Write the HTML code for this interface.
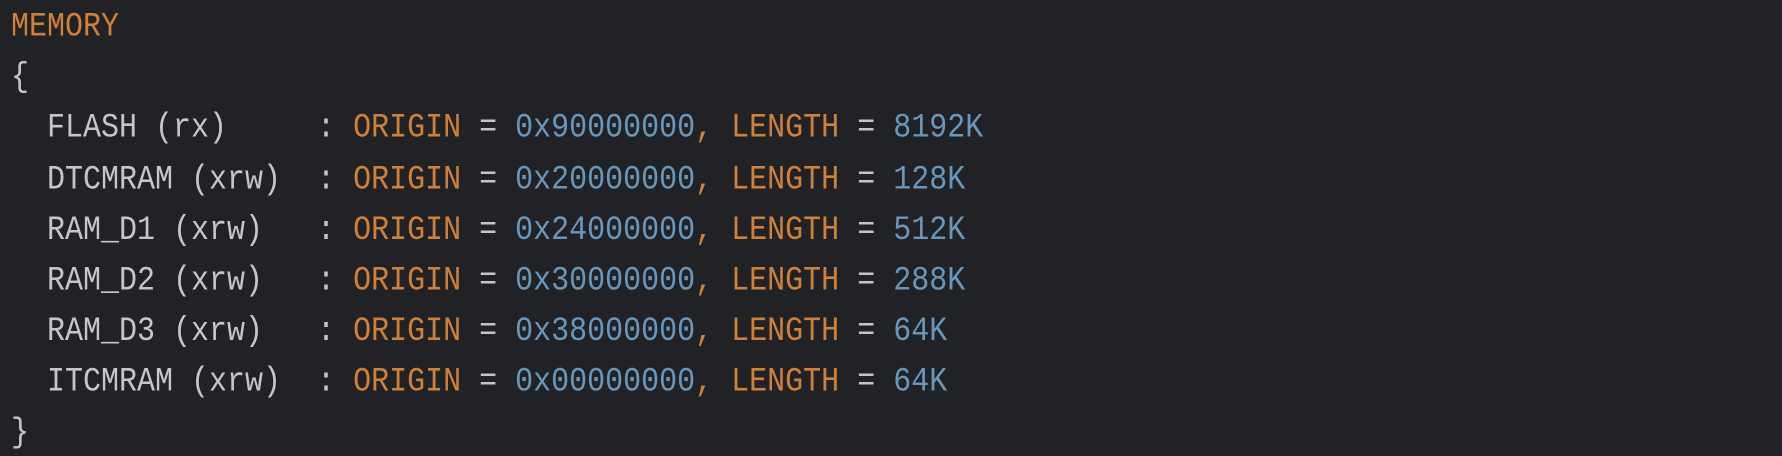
<!DOCTYPE html>
<html><head><meta charset="utf-8"><style>
html,body{margin:0;padding:0;background:#212225;width:1782px;height:456px;overflow:hidden}
pre{margin:2px 0 0 0;padding:0 0 0 11px;font-family:"Liberation Mono",monospace;font-size:30px;line-height:44.17px;color:#c4c6cc;white-space:pre;transform:scaleY(1.15);transform-origin:0 0}
.o{color:#cf8039}.b{color:#6897bb}
</style></head><body><pre><span class="o">MEMORY</span>
{
  FLASH (rx)     : <span class="o">ORIGIN</span> = <span class="b">0x90000000</span><span class="o">,</span> <span class="o">LENGTH</span> = <span class="b">8192K</span>
  DTCMRAM (xrw)  : <span class="o">ORIGIN</span> = <span class="b">0x20000000</span><span class="o">,</span> <span class="o">LENGTH</span> = <span class="b">128K</span>
  RAM_D1 (xrw)   : <span class="o">ORIGIN</span> = <span class="b">0x24000000</span><span class="o">,</span> <span class="o">LENGTH</span> = <span class="b">512K</span>
  RAM_D2 (xrw)   : <span class="o">ORIGIN</span> = <span class="b">0x30000000</span><span class="o">,</span> <span class="o">LENGTH</span> = <span class="b">288K</span>
  RAM_D3 (xrw)   : <span class="o">ORIGIN</span> = <span class="b">0x38000000</span><span class="o">,</span> <span class="o">LENGTH</span> = <span class="b">64K</span>
  ITCMRAM (xrw)  : <span class="o">ORIGIN</span> = <span class="b">0x00000000</span><span class="o">,</span> <span class="o">LENGTH</span> = <span class="b">64K</span>
}</pre></body></html>
